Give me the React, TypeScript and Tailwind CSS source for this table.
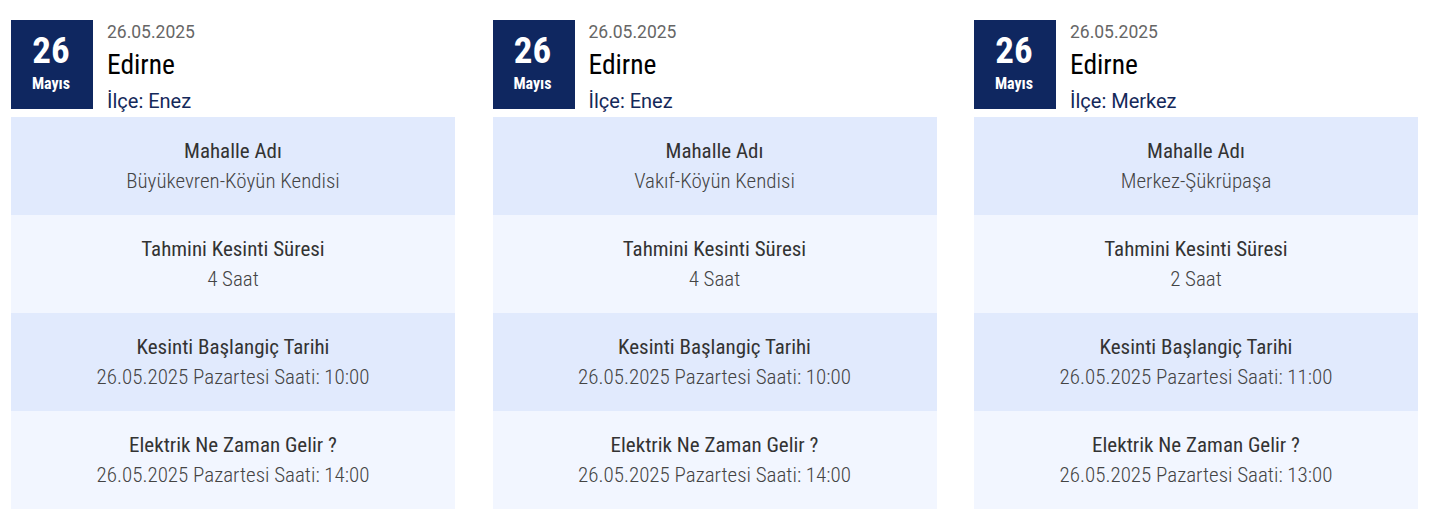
import React from "react";

type Card = {
  district: string;
  mahalle: string;
  sure: string;
  start: string;
  end: string;
};

const cards: Card[] = [
  { district: "Enez", mahalle: "Büyükevren-Köyün Kendisi", sure: "4 Saat", start: "10:00", end: "14:00" },
  { district: "Enez", mahalle: "Vakıf-Köyün Kendisi", sure: "4 Saat", start: "10:00", end: "14:00" },
  { district: "Merkez", mahalle: "Merkez-Şükrüpaşa", sure: "2 Saat", start: "11:00", end: "13:00" },
];

const cond = "font-['Roboto_Condensed','Liberation_Sans_Narrow',Roboto,sans-serif]";

function Row({ label, value, dark }: { label: string; value: string; dark: boolean }) {
  return (
    <div
      className={`h-[98px] flex flex-col items-center justify-center text-center font-['Roboto_Condensed','Liberation_Sans_Narrow',Roboto,sans-serif] ${
        dark ? "bg-[#e1eafd]" : "bg-[#f2f6ff]"
      }`}
    >
      <div className="text-[21px] leading-[30px] text-[#333333] font-normal">{label}</div>
      <div className="text-[21px] leading-[30px] text-[#444444] font-light">{value}</div>
    </div>
  );
}

export default function App() {
  return (
    <div className="bg-white w-[1437px] h-[516px] pl-[11px] pt-[20px] flex gap-[37.5px] font-['Roboto','Noto_Sans',sans-serif]">
      {cards.map((c, i) => (
        <div key={i} className="w-[444px] flex flex-col">
          <div className="flex h-[97px]">
            <div
              className={`w-[82px] h-[89px] bg-[#0f2760] flex flex-col items-center text-white pt-[12px] pr-[2px] ${cond}`}
            >
              <div className="text-[37px] font-bold leading-[37px]">26</div>
              <div className="text-[16px] font-bold leading-[16px] mt-[7px]">Mayıs</div>
            </div>
            <div className="pl-[14px] flex flex-col">
              <div className="text-[17.5px] leading-[22px] text-[#666666] mt-[1px]">26.05.2025</div>
              <div className={`text-[27.5px] leading-[34px] text-black mt-[5px] ${cond}`}>Edirne</div>
              <div className="text-[20px] leading-[28px] text-[#14295a] mt-[5px]">İlçe: {c.district}</div>
            </div>
          </div>
          <Row label="Mahalle Adı" value={c.mahalle} dark />
          <Row label="Tahmini Kesinti Süresi" value={c.sure} dark={false} />
          <Row label="Kesinti Başlangiç Tarihi" value={`26.05.2025 Pazartesi Saati: ${c.start}`} dark />
          <Row label="Elektrik Ne Zaman Gelir ?" value={`26.05.2025 Pazartesi Saati: ${c.end}`} dark={false} />
        </div>
      ))}
    </div>
  );
}
